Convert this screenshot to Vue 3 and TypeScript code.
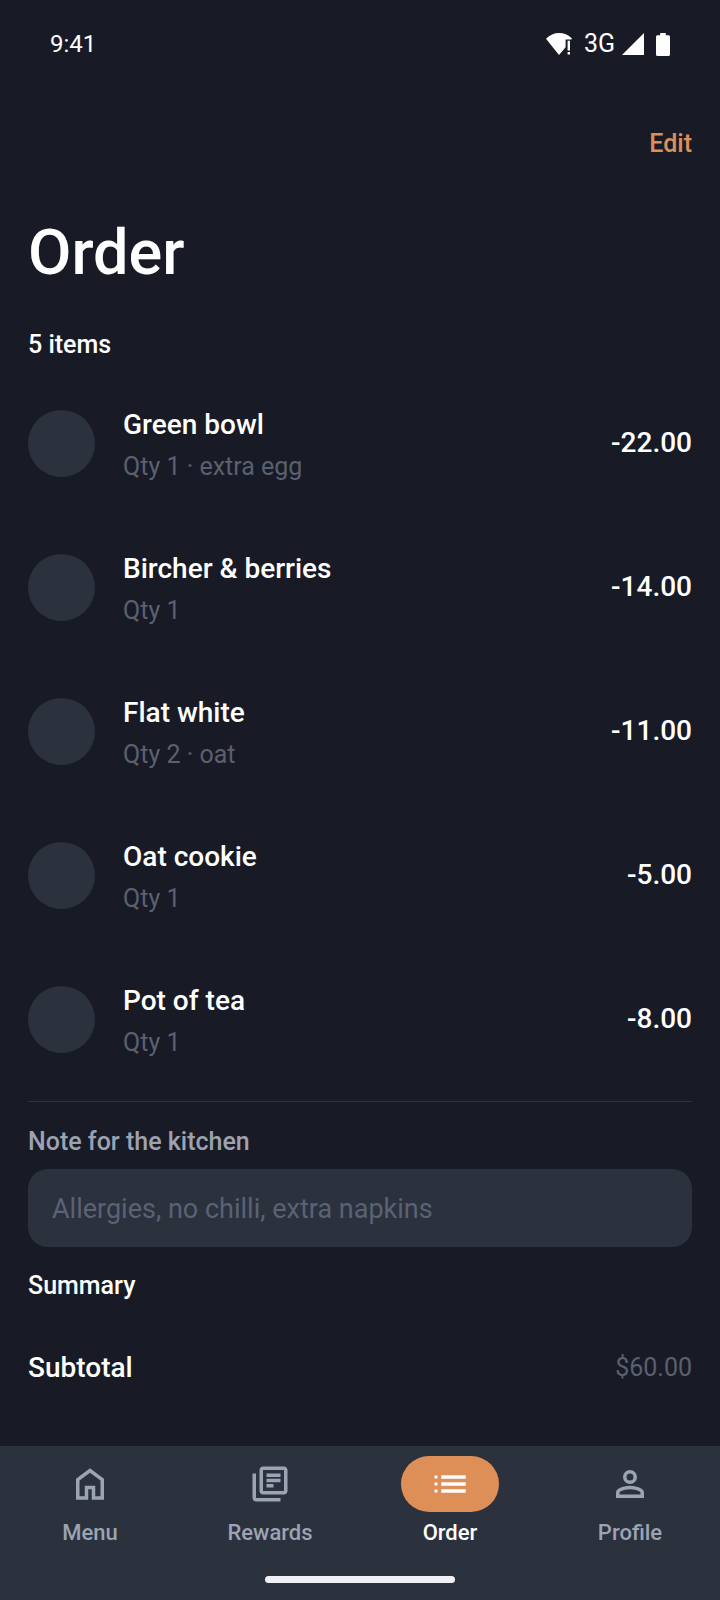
<script setup lang="ts">
import { ref } from 'vue'

interface OrderItem {
  name: string
  detail: string
  price: string
}

const items: OrderItem[] = [
  { name: 'Green bowl', detail: 'Qty 1 · extra egg', price: '-22.00' },
  { name: 'Bircher & berries', detail: 'Qty 1', price: '-14.00' },
  { name: 'Flat white', detail: 'Qty 2 · oat', price: '-11.00' },
  { name: 'Oat cookie', detail: 'Qty 1', price: '-5.00' },
  { name: 'Pot of tea', detail: 'Qty 1', price: '-8.00' },
]

const note = ref('')

const tabs = [
  {
    label: 'Menu',
    icon: 'M6 19h3v-6h6v6h3v-9l-6-4.5L6 10v9zm-2 2V9l8-6 8 6v12h-7v-6h-2v6H4z',
  },
  {
    label: 'Rewards',
    icon: 'M4 6H2v14c0 1.1.9 2 2 2h14v-2H4V6zm16-4H8c-1.1 0-2 .9-2 2v12c0 1.1.9 2 2 2h12c1.1 0 2-.9 2-2V4c0-1.1-.9-2-2-2zm0 14H8V4h12v12zM10 6h8v2h-8zm0 3h8v2h-8zm0 3h4v2h-4z',
  },
  {
    label: 'Order',
    icon: 'M7 7h14v2H7zm0 4h14v2H7zm0 4h14v2H7zM4 7a1 1 0 1 1 0 2 1 1 0 0 1 0-2zm0 4a1 1 0 1 1 0 2 1 1 0 0 1 0-2zm0 4a1 1 0 1 1 0 2 1 1 0 0 1 0-2z',
  },
  {
    label: 'Profile',
    icon: 'M12 12a4 4 0 1 1 0-8 4 4 0 0 1 0 8zm0-2a2 2 0 1 0 0-4 2 2 0 0 0 0 4zM4 20v-2.8q0-.85.438-1.563T5.6 14.55q1.55-.775 3.15-1.163T12 13t3.25.388 3.15 1.163q.725.375 1.163 1.088T20 17.2V20zm2-2h12v-.8q0-.275-.138-.5t-.362-.35q-1.35-.675-2.725-1.013T12 15t-2.775.338T6.5 16.35q-.225.125-.363.35T6 17.2z',
  },
]

const active = ref('Order')
</script>

<template>
  <div class="screen">
    <div class="status">
      <span>9:41</span>
      <div class="status-icons">
        <svg width="26" height="22" viewBox="0 0 26 22" aria-hidden="true">
          <path d="M0 5.8C3.8 1.8 8.2 0 13 0s9.2 1.8 13 5.4l-.8 1.2h-5.6v7.6L13 22z" />
          <path d="M21.6 7.8H24v9.6h-2.4zM21.6 19H24v2.6h-2.4z" />
        </svg>
        <span class="network">3G</span>
        <svg class="signal" width="22" height="22" viewBox="0 0 22 22" aria-hidden="true">
          <path d="M0 22 22 0v22z" />
        </svg>
        <svg width="14" height="23" viewBox="0 0 14 23" aria-hidden="true">
          <path d="M4.2 0h5.6v2.3h2.7c.8 0 1.5.7 1.5 1.5v17.7c0 .8-.7 1.5-1.5 1.5h-11C.7 23 0 22.3 0 21.5V3.8c0-.8.7-1.5 1.5-1.5h2.7z" />
        </svg>
      </div>
    </div>

    <header class="topbar">
      <button type="button" class="edit">Edit</button>
    </header>

    <main class="content">
      <h1>Order</h1>
      <h2>5 items</h2>
      <ul class="items">
        <li v-for="item in items" :key="item.name" class="item">
          <span class="avatar"></span>
          <div class="info">
            <span class="name">{{ item.name }}</span>
            <span class="detail">{{ item.detail }}</span>
          </div>
          <span class="price">{{ item.price }}</span>
        </li>
      </ul>

      <section class="note">
        <label for="kitchen-note">Note for the kitchen</label>
        <input
          id="kitchen-note"
          v-model="note"
          type="text"
          placeholder="Allergies, no chilli, extra napkins"
        />
      </section>

      <section class="summary">
        <h2>Summary</h2>
        <div class="total">
          <span class="name">Subtotal</span>
          <span class="detail">$60.00</span>
        </div>
      </section>
    </main>

    <nav class="tabbar">
      <div class="tabs">
        <button
          v-for="tab in tabs"
          :key="tab.label"
          type="button"
          class="tab"
          :class="{ active: tab.label === active }"
          @click="active = tab.label"
        >
          <span class="pill">
            <svg width="42" height="42" viewBox="0 0 24 24" aria-hidden="true">
              <path fill-rule="evenodd" :d="tab.icon" />
            </svg>
          </span>
          <span>{{ tab.label }}</span>
        </button>
      </div>
      <div class="handle"></div>
    </nav>
  </div>
</template>

<style>
body {
  margin: 0;
  background: #181b25;
}
</style>

<style scoped>
.screen {
  display: flex;
  flex-direction: column;
  min-height: 100vh;
  background: #181b25;
  color: #fff;
  font-family: Roboto, 'Noto Sans', sans-serif;
  font-size: 25px;
  line-height: 32px;
}

svg {
  display: block;
  fill: currentColor;
}

button {
  border: 0;
  padding: 0;
  background: none;
  color: inherit;
  font: inherit;
  cursor: pointer;
}

.status {
  display: flex;
  align-items: center;
  justify-content: space-between;
  height: 88px;
  padding: 0 50px;
  font-size: 24px;
}

.status-icons {
  display: flex;
  align-items: center;
  gap: 12px;
}

.network {
  font-size: 25px;
}

.signal {
  margin-left: -5px;
}

.topbar {
  display: flex;
  align-items: center;
  justify-content: flex-end;
  height: 112px;
  padding: 0 28px;
}

.edit {
  color: #de8e57;
  font-weight: 500;
}

.content {
  flex: 1;
  padding: 17px 28px 38px;
}

h1 {
  margin: 0 0 40px;
  font-size: 63px;
  line-height: 72px;
  font-weight: 500;
}

h2 {
  margin: 0;
  font-size: 25px;
  line-height: 32px;
  font-weight: 500;
}

.items {
  margin: 10px 0 0;
  padding: 0;
  list-style: none;
}

.item {
  display: flex;
  align-items: center;
  gap: 28px;
  height: 144px;
}

.avatar {
  flex: none;
  width: 67px;
  height: 67px;
  border-radius: 50%;
  background: #2c313e;
}

.info {
  display: flex;
  flex: 1;
  flex-direction: column;
  gap: 2px;
  padding-top: 6px;
}

.name,
.price {
  font-size: 28px;
  line-height: 40px;
  font-weight: 500;
}

.detail {
  color: #5a6070;
  font-size: 25px;
  line-height: 40px;
}

.note {
  display: flex;
  flex-direction: column;
  gap: 11px;
  margin-top: 10px;
  padding-top: 24px;
  border-top: 1px solid #2f333f;
}

.note label {
  color: #9da2b0;
  font-weight: 500;
}

.note input {
  box-sizing: border-box;
  width: 100%;
  height: 78px;
  padding: 2px 24px 0;
  border: 0;
  border-radius: 20px;
  outline: 0;
  background: #2c313e;
  color: #fff;
  font: inherit;
  font-size: 27px;
}

.note input::placeholder {
  color: #5a6274;
  opacity: 1;
}

.summary {
  margin-top: 23px;
}

.total {
  display: flex;
  align-items: center;
  justify-content: space-between;
  height: 80px;
  margin-top: 26px;
}

.tabbar {
  padding: 10px 0 17px;
  background: #2c313e;
}

.tabs {
  display: grid;
  grid-template-columns: repeat(4, 1fr);
}

.tab {
  display: flex;
  flex-direction: column;
  align-items: center;
  gap: 7px;
  color: #9ca3b3;
  font-size: 22px;
  line-height: 28px;
  font-weight: 500;
}

.pill {
  display: flex;
  align-items: center;
  justify-content: center;
  width: 98px;
  height: 56px;
  border-radius: 28px;
}

.active {
  color: #fff;
}

.active .pill {
  background: #de8e57;
}

.handle {
  width: 190px;
  height: 7px;
  margin: 29px auto 0;
  border-radius: 4px;
  background: #f0f0f6;
}
</style>
